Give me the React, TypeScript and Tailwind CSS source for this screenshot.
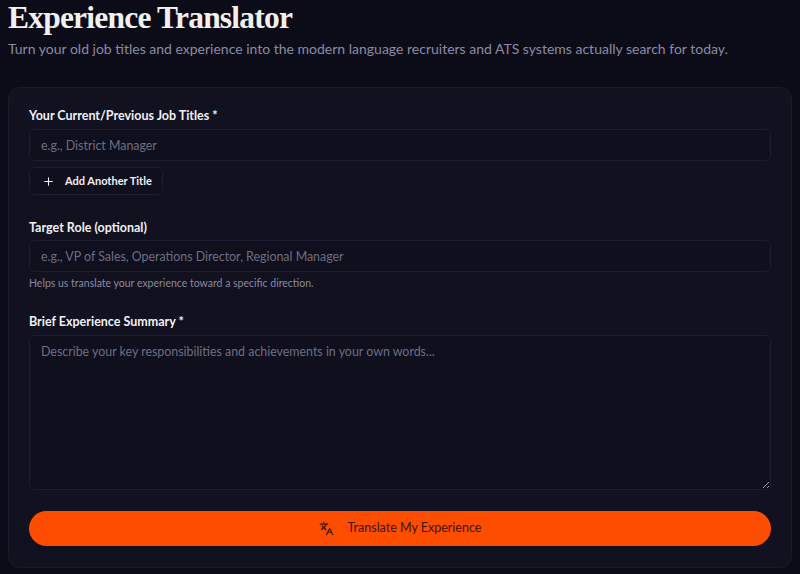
import { Languages, Plus } from "lucide-react";

const inputCls =
  "h-8 w-full rounded-md border border-[#1d1d2f] bg-[#0f0f1d] px-[11px] text-[12.4px] text-[#d4d4e0] placeholder:text-[#6e6e82] outline-none";

export default function App() {
  return (
    <div className="min-h-[574px] w-full bg-[#0c0c19] px-2 pb-2 font-['Lato','Noto_Sans',sans-serif] text-[#e8e8f0]">
      <h1 className="pt-px font-['Liberation_Serif','DejaVu_Serif',serif] text-[31.5px] font-bold leading-[34px] tracking-tight text-[#f2f0ee]">
        Experience Translator
      </h1>
      <p className="mt-[4px] text-[14px] leading-5 text-[#8b8ba3]">
        Turn your old job titles and experience into the modern language recruiters and ATS systems actually search for today.
      </p>

      <div className="mt-[28px] rounded-xl border border-[#1a1a2c] bg-[#11111f] px-[20px] pt-[18px] pb-[21px]">
        <label className="block text-[12.5px] font-bold leading-5 text-[#f0f0f5]">
          Your Current/Previous Job Titles *
        </label>
        <input className={`mt-[3px] ${inputCls}`} placeholder="e.g., District Manager" />
        <button
          type="button"
          className="mt-[6px] flex h-[28px] items-center gap-[10px] rounded-md border border-[#1d1d2f] bg-[#0f0f1d] pl-3 pr-[10px] text-[11px] font-bold text-[#f0f0f5]"
        >
          <Plus size={13} strokeWidth={2} />
          Add Another Title
        </button>

        <label className="mt-[23px] block text-[12.5px] font-bold leading-5 text-[#f0f0f5]">
          Target Role (optional)
        </label>
        <input
          className={`mt-[2px] ${inputCls}`}
          placeholder="e.g., VP of Sales, Operations Director, Regional Manager"
        />
        <p className="mt-[4px] text-[10.5px] leading-[14px] text-[#8a8aa0]">
          Helps us translate your experience toward a specific direction.
        </p>

        <label className="mt-[22px] block text-[12.5px] font-bold leading-5 text-[#f0f0f5]">
          Brief Experience Summary *
        </label>
        <textarea
          className="mt-[3px] block h-[155px] w-full resize-y rounded-md border border-[#1d1d2f] bg-[#0f0f1d] px-[11px] py-[7px] text-[12.4px] text-[#d4d4e0] placeholder:text-[#6e6e82] outline-none"
          placeholder="Describe your key responsibilities and achievements in your own words..."
        />

        <button
          type="button"
          className="mt-[21px] flex h-[35px] w-full items-center justify-center gap-[14px] rounded-full bg-[#ff4d00] text-[12.5px] text-[#3b1206]"
        >
          <Languages size={15} strokeWidth={1.75} />
          Translate My Experience
        </button>
      </div>
    </div>
  );
}
